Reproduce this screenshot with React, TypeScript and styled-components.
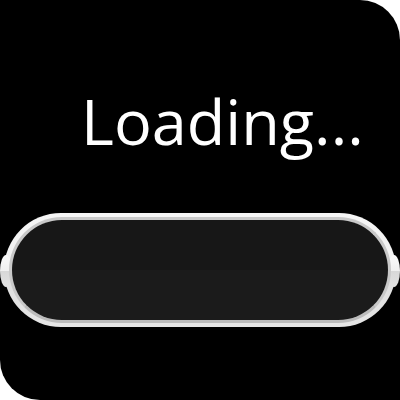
import styled, { createGlobalStyle } from "styled-components";

const GlobalStyle = createGlobalStyle`
    html, body {
        margin: 0;
        padding: 0;
        background: #ffffff;
    }
`;

// the black tile with two rounded corners
const Frame = styled.div`
    width: 400px;
    height: 400px;
    box-sizing: border-box;
    background: #000000;
    border-radius: 0 40px 0 40px;
    padding-top: 89px;
    display: flex;
    flex-direction: column;
`;

const Title = styled.div`
    margin-left: 81px;
    font-family: "Open Sans", "Noto Sans", sans-serif;
    font-size: 63px;
    line-height: 63px;
    color: #ffffff;
    white-space: nowrap;
`;

const Bar = styled.div`
    position: relative;
    margin: 61px 0 0 4px;
    width: 392px;
    height: 114px;
    box-sizing: border-box;
    padding: 4px 5px;
    border-radius: 57px;
    background: linear-gradient(#f6f6f6 0%, #f1f1f1 50%, #dedede 50%, #e6e6e6 100%);
    display: flex;

    &::before,
    &::after {
        content: "";
        position: absolute;
        top: 42px;
        width: 12px;
        height: 32px;
        border-radius: 50%;
        background: linear-gradient(#fafafa 0%, #f0f0f0 50%, #d8d8d8 50%, #e2e2e2 100%);
    }

    &::before {
        left: -4px;
    }

    &::after {
        right: -4px;
    }
`;

const Track = styled.div`
    position: relative;
    z-index: 1;
    flex: 1;
    border-radius: 53px;
    border: 3px solid #c9c9c9;
    border-bottom-color: #bcbcbc;
    background: linear-gradient(#171717 0%, #171717 50%, #1b1b1b 50%, #1b1b1b 100%);
`;

function App() {
    return (
        <>
            <GlobalStyle />
            <Frame>
                <Title>Loading...</Title>
                <Bar>
                    <Track />
                </Bar>
            </Frame>
        </>
    );
}

export default App;
